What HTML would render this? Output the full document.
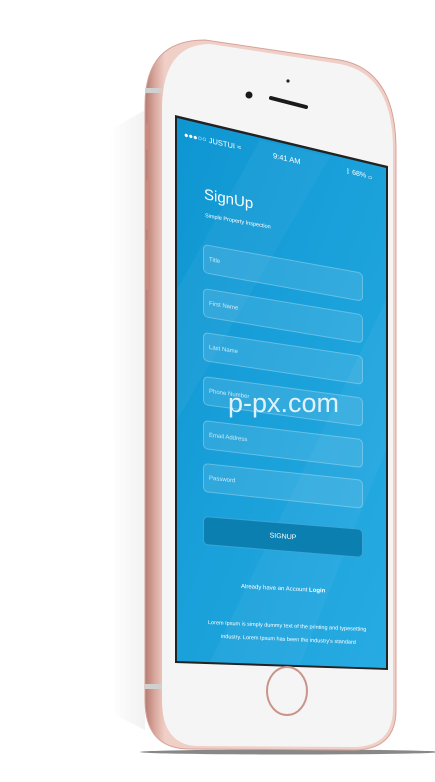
<!DOCTYPE html>
<html><head><meta charset="utf-8"><style>
html,body{margin:0;padding:0;background:#fff;width:435px;height:782px;overflow:hidden;font-family:"Liberation Sans",sans-serif}
.a{position:absolute;transform-origin:0 0;color:#fff;white-space:nowrap}
.f{position:absolute;left:203px;width:160px;height:29px;border-radius:5px;background:rgba(255,255,255,0.1);border:1px solid rgba(255,255,255,0.25);transform-origin:0 0;box-sizing:border-box;font-size:6px;color:rgba(255,255,255,0.75);padding:11px 0 0 5px}
</style></head><body>
<svg width="435" height="782" style="position:absolute;left:0;top:0">
<defs>
<linearGradient id="sh" x1="0" x2="1"><stop offset="0" stop-color="#fff"/><stop offset="1" stop-color="#e4e4e4"/></linearGradient>
<linearGradient id="scr" x1="0" y1="0" x2="1" y2="1"><stop offset="0" stop-color="#0e96d2"/><stop offset="1" stop-color="#27abe2"/></linearGradient>
<linearGradient id="rose" gradientUnits="userSpaceOnUse" x1="145" y1="0" x2="165" y2="0"><stop offset="0" stop-color="#b57a70"/><stop offset="0.5" stop-color="#d9a89e"/><stop offset="1" stop-color="#f0cfc7"/></linearGradient>
</defs>
<path d="M110,130 L145,110 L145,730 L115,715 Z" fill="url(#sh)" opacity="0.5"/>
<ellipse cx="290" cy="752" rx="150" ry="2.5" fill="#555" opacity="0.7"/>
<path d="M145,105 Q145,40 205,40 L340,60 Q396,70 396,150 L396,710 Q396,749 355,750 L190,749 Q145,749 145,700 Z" fill="url(#rose)"/>
<path d="M145,105 Q145,40 205,40 L340,60 Q396,70 396,150 L396,710 Q396,749 355,750 L190,749 Q145,749 145,700 Z" fill="none" stroke="#d5a399" stroke-width="1"/>
<path d="M162,105 Q164,44 210,44 L340,64 Q393,74 393,150 L393,708 Q393,746 355,747 L196,746 Q162,744 162,700 Z" fill="#f5f5f5"/>
<rect x="145" y="88" width="17" height="5" fill="#d0d0d0"/>
<rect x="145" y="684" width="17" height="5" fill="#d0d0d0"/>
<rect x="146" y="123" width="4" height="27" rx="2" fill="#c98a80"/>
<rect x="146" y="180" width="4" height="50" rx="2" fill="#c98a80"/>
<rect x="146" y="240" width="4" height="50" rx="2" fill="#c98a80"/>
<circle cx="249" cy="95" r="3.5" fill="#1a1a1a"/>
<circle cx="288" cy="81" r="1.6" fill="#222"/>
<line x1="271" y1="98" x2="306" y2="107" stroke="#1a1a1a" stroke-width="4" stroke-linecap="round"/>
<polygon points="175,115 388,166 388,670 175,663" fill="#222"/>
<polygon points="177,118 386,168 386,668 177,661" fill="url(#scr)"/>
<polygon points="260,140 330,157 177,420 177,290" fill="#fff" opacity="0.04"/>
<polygon points="386,300 386,450 300,665 210,662" fill="#fff" opacity="0.04"/>
<ellipse cx="287" cy="691" rx="20" ry="24" fill="none" stroke="#c9948a" stroke-width="2"/>
</svg>
<div class="a" style="left:184px;top:130px;font-size:7.5px;transform:skewY(13deg)">●●●○○ JUSTUI ≈</div>
<div class="a" style="left:273px;top:151px;font-size:7.5px;transform:skewY(13deg)">9:41 AM</div>
<div class="a" style="left:346px;top:168px;font-size:7px;transform:skewY(13deg)">ᛒ 68% ▭</div>
<div class="a" style="left:204px;top:186px;font-size:15px;transform:skewY(11deg)">SignUp</div>
<div class="a" style="left:205px;top:213px;font-size:5.5px;transform:skewY(10deg)">Simple Property Inspection</div>
<div class="f" style="top:244px;transform:skewY(10.2deg)">Title</div>
<div class="f" style="top:288px;transform:skewY(9.4deg)">First Name</div>
<div class="f" style="top:332px;transform:skewY(8.5deg)">Last Name</div>
<div class="f" style="top:376px;transform:skewY(7.7deg)">Phone Number</div>
<div class="f" style="top:420px;transform:skewY(6.8deg)">Email Address</div>
<div class="f" style="top:463px;transform:skewY(6deg)">Password</div>
<div class="f" style="top:516px;background:#0b7fb0;border-color:#3aa6d8;transform:skewY(4.6deg);text-align:center;padding:10px 0 0;font-size:7px;color:#fff">SIGNUP</div>
<div class="a" style="left:241px;top:584px;font-size:6px;transform:skewY(3deg)">Already have an Account <b>Login</b></div>
<div class="a" style="left:208px;top:620px;font-size:5.5px;transform:skewY(2.5deg)">Lorem Ipsum is simply dummy text of the printing and typesetting</div>
<div class="a" style="left:221px;top:634px;font-size:5.5px;transform:skewY(2.5deg)">industry. Lorem Ipsum has been the industry's standard</div>
<div class="a" style="left:228px;top:388px;font-size:27px;color:rgba(255,255,255,0.85)">p-px.com</div>
</body></html>
